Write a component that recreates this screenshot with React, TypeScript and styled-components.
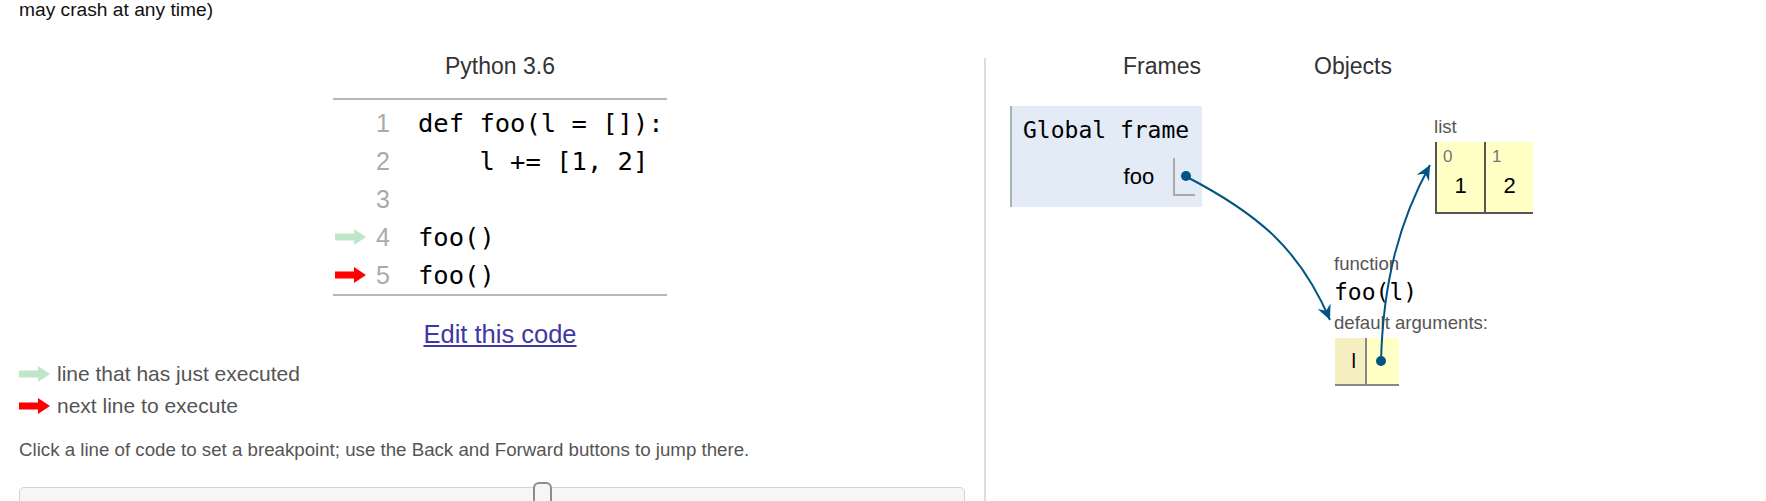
import React from 'react';
import styled, { createGlobalStyle } from 'styled-components';

const GlobalStyle = createGlobalStyle`
  html, body {
    margin: 0;
    padding: 0;
    background: #fff;
  }
  body {
    font-family: "Liberation Sans", Arial, sans-serif;
    color: #000;
    overflow: hidden;
  }
`;

const MONO = '"DejaVu Sans Mono", "Liberation Mono", monospace';
const POINTER = '#005583';

type Pt = [number, number];

interface Conn {
  p0: Pt;
  p1: Pt;
  p2: Pt;
  p3: Pt;
}

// pointer arrows, in coordinates of the visualization panel
const connectors: Conn[] = [
  { p0: [201, 119], p1: [274, 157], p2: [314, 192], p3: [344, 262] },
  { p0: [395, 304], p1: [397, 222], p2: [414, 162], p3: [444, 107] },
];

const codeLines = [
  { no: 1, text: 'def foo(l = []):', mark: '' },
  { no: 2, text: '    l += [1, 2]', mark: '' },
  { no: 3, text: '', mark: '' },
  { no: 4, text: 'foo()', mark: 'prev' },
  { no: 5, text: 'foo()', mark: 'next' },
];

const ArrowGlyph: React.FC<{ color: string }> = ({ color }) => (
  <svg width="31" height="16" viewBox="0 0 31 16">
    <rect x="0" y="4.5" width="20" height="7" fill={color} />
    <polygon points="19,0 31,8 19,16" fill={color} />
  </svg>
);

const Pointer: React.FC<{ c: Conn }> = ({ c }) => {
  const { p0, p1, p2, p3 } = c;
  const ang = (Math.atan2(p3[1] - p2[1], p3[0] - p2[0]) * 180) / Math.PI;
  return (
    <g>
      <path
        d={`M${p0[0]},${p0[1]} C${p1[0]},${p1[1]} ${p2[0]},${p2[1]} ${p3[0]},${p3[1]}`}
        fill="none"
        stroke={POINTER}
        strokeWidth="2"
      />
      <polygon
        points="0,0 -15,-7 -10,0 -15,7"
        fill={POINTER}
        transform={`translate(${p3[0]},${p3[1]}) rotate(${ang})`}
      />
    </g>
  );
};

const App: React.FC = () => {
  return (
    <Page>
      <GlobalStyle />
      <TopNote>may crash at any time)</TopNote>
      <Main>
        <LeftPanel>
          <CodePane>
            <PaneTitle>Python 3.6</PaneTitle>
            <CodeBox>
              {codeLines.map((l) => (
                <CodeRow key={l.no}>
                  <ArrowCell>
                    {l.mark === 'prev' && <ArrowGlyph color="#bfe6c8" />}
                    {l.mark === 'next' && <ArrowGlyph color="#ff0000" />}
                  </ArrowCell>
                  <LineNo>{l.no}</LineNo>
                  <CodeText>{l.text}</CodeText>
                </CodeRow>
              ))}
            </CodeBox>
            <EditWrap>
              <EditLink href="#">Edit this code</EditLink>
            </EditWrap>
          </CodePane>

          <Legend>
            <LegendRow>
              <ArrowGlyph color="#bfe6c8" />
              <span>line that has just executed</span>
            </LegendRow>
            <LegendRow>
              <ArrowGlyph color="#ff0000" />
              <span>next line to execute</span>
            </LegendRow>
          </Legend>

          <Hint>Click a line of code to set a breakpoint; use the Back and Forward buttons to jump there.</Hint>

          <SliderTrack>
            <SliderHandle />
          </SliderTrack>
        </LeftPanel>

        <RightPanel>
          <VizRow>
            <FramesCol>
              <ColTitle align="center">Frames</ColTitle>
              <FrameBox>
                <FrameTitle>Global frame</FrameTitle>
                <VarRow>
                  <VarName>foo</VarName>
                  <VarValue>
                    <Dot />
                  </VarValue>
                </VarRow>
              </FrameBox>
            </FramesCol>

            <HeapCol>
              <ColTitle align="left">Objects</ColTitle>
              <Heap>
                <HeapRow indent={100} gap={42}>
                  <ObjLabel>list</ObjLabel>
                  <ListTable>
                    <ListCell>
                      <ListIndex>0</ListIndex>
                      <ListValue>1</ListValue>
                    </ListCell>
                    <ListCell>
                      <ListIndex>1</ListIndex>
                      <ListValue>2</ListValue>
                    </ListCell>
                  </ListTable>
                </HeapRow>

                <HeapRow indent={0} gap={40}>
                  <ObjLabel>function</ObjLabel>
                  <FuncName>foo(l)</FuncName>
                  <ObjLabel style={{ marginTop: 8 }}>default arguments:</ObjLabel>
                  <DefaultsTable>
                    <KeyCell>l</KeyCell>
                    <ValCell>
                      <Dot />
                    </ValCell>
                  </DefaultsTable>
                </HeapRow>
              </Heap>
            </HeapCol>
          </VizRow>

          <ArrowLayer width="780" height="443">
            {connectors.map((c, i) => (
              <Pointer key={i} c={c} />
            ))}
          </ArrowLayer>
        </RightPanel>
      </Main>
    </Page>
  );
};

export default App;

const Page = styled.div`
  width: 1766px;
`;

const TopNote = styled.div`
  padding-left: 19px;
  margin-top: -1px;
  font-size: 19.2px;
  line-height: 21px;
  color: #111;
`;

const Main = styled.div`
  display: flex;
  margin-top: 38px;
`;

const LeftPanel = styled.div`
  flex: 0 0 984px;
  box-sizing: border-box;
  padding: 0 19px;
`;

const CodePane = styled.div`
  width: 334px;
  margin-left: 314px;
`;

const PaneTitle = styled.div`
  text-align: center;
  font-size: 23px;
  line-height: 17px;
  color: #333;
`;

const CodeBox = styled.div`
  margin-top: 23px;
  padding-top: 4px;
  border-top: 2px solid #b8b8b8;
  border-bottom: 2px solid #b8b8b8;
`;

const CodeRow = styled.div`
  display: flex;
  align-items: center;
  height: 38px;
`;

const ArrowCell = styled.div`
  width: 36px;
  box-sizing: border-box;
  padding-left: 2px;
  display: flex;
  align-items: center;
`;

const LineNo = styled.div`
  width: 21px;
  text-align: right;
  font-size: 25px;
  color: #aaa;
`;

const CodeText = styled.div`
  padding-left: 28px;
  font-family: ${MONO};
  font-size: 25.5px;
  white-space: pre;
`;

const EditWrap = styled.div`
  margin-top: 24px;
  text-align: center;
  font-size: 25.5px;
  line-height: 28px;
`;

const EditLink = styled.a`
  color: #3f37a3;
  text-decoration: underline;
`;

const Legend = styled.div`
  margin-top: 10px;
`;

const LegendRow = styled.div`
  display: flex;
  align-items: center;
  gap: 7px;
  height: 32px;
  font-size: 21px;
  color: #555;
`;

const Hint = styled.div`
  margin-top: 17px;
  font-size: 18.7px;
  line-height: 22px;
  color: #555;
`;

const SliderTrack = styled.div`
  position: relative;
  margin-top: 26px;
  height: 24px;
  border: 1px solid #d4d4d4;
  border-radius: 5px;
  background: #f6f6f6;
`;

const SliderHandle = styled.div`
  position: absolute;
  left: 513px;
  top: -6px;
  width: 19px;
  height: 30px;
  box-sizing: border-box;
  border: 2px solid #8c8c8c;
  border-radius: 6px;
  background: #f6f6f6;
`;

const RightPanel = styled.div`
  position: relative;
  flex: 1;
  min-height: 460px;
  border-left: 2px solid #ddd;
  padding-left: 24px;
`;

const VizRow = styled.div`
  display: flex;
`;

const FramesCol = styled.div`
  width: 304px;
`;

const ColTitle = styled.div<{ align: 'left' | 'center' }>`
  text-align: ${(p) => p.align};
  font-size: 23px;
  line-height: 17px;
  color: #333;
`;

const FrameBox = styled.div`
  display: flex;
  flex-direction: column;
  width: fit-content;
  margin-top: 31px;
  padding: 11px 13px 11px 11px;
  border-left: 2px solid #a6b3b6;
  background: #e2ebf6;
`;

const FrameTitle = styled.div`
  font-family: ${MONO};
  font-size: 23px;
  line-height: 27px;
`;

const VarRow = styled.div`
  display: flex;
  justify-content: flex-end;
  align-items: center;
  margin-top: 14px;
`;

const VarName = styled.div`
  font-size: 22px;
  padding-right: 19px;
`;

const VarValue = styled.div`
  display: flex;
  align-items: center;
  width: 14px;
  height: 36px;
  padding-left: 6px;
  box-sizing: content-box;
  margin-right: -6px;
  border-left: 2px solid #aaa;
  border-bottom: 2px solid #aaa;
`;

const Dot = styled.div`
  flex: 0 0 10px;
  width: 10px;
  height: 10px;
  border-radius: 50%;
  background: ${POINTER};
`;

const HeapCol = styled.div`
  flex: 1;
`;

const Heap = styled.div`
  padding-left: 20px;
`;

const HeapRow = styled.div<{ indent: number; gap: number }>`
  margin-left: ${(p) => p.indent}px;
  margin-top: ${(p) => p.gap}px;
`;

const ObjLabel = styled.div`
  font-size: 18.6px;
  line-height: 20px;
  color: #555;
`;

const ListTable = styled.div`
  display: flex;
  margin-top: 5px;
  margin-left: 1px;
`;

const ListCell = styled.div`
  width: 49px;
  height: 72px;
  box-sizing: border-box;
  padding-top: 5px;
  border-left: 2px solid #555;
  border-bottom: 2px solid #555;
  background: #ffffc6;
`;

const ListIndex = styled.div`
  padding-left: 6px;
  font-size: 17px;
  line-height: 19px;
  color: #777;
`;

const ListValue = styled.div`
  margin-top: 7px;
  text-align: center;
  font-size: 22px;
  line-height: 26px;
`;

const FuncName = styled.div`
  margin-top: 5px;
  font-family: ${MONO};
  font-size: 23px;
  line-height: 26px;
`;

const DefaultsTable = styled.div`
  display: flex;
  margin-top: 5px;
  margin-left: 1px;
`;

const KeyCell = styled.div`
  width: 30px;
  height: 48px;
  box-sizing: border-box;
  padding-right: 9px;
  text-align: right;
  font-size: 20px;
  line-height: 46px;
  background: #f5efc2;
  border-bottom: 2px solid #888;
`;

const ValCell = styled.div`
  display: flex;
  align-items: center;
  width: 34px;
  height: 48px;
  box-sizing: border-box;
  padding-left: 9px;
  background: #ffffc6;
  border-left: 2px solid #888;
  border-bottom: 2px solid #888;
`;

const ArrowLayer = styled.svg`
  position: absolute;
  left: 0;
  top: 0;
  pointer-events: none;
  overflow: visible;
`;
